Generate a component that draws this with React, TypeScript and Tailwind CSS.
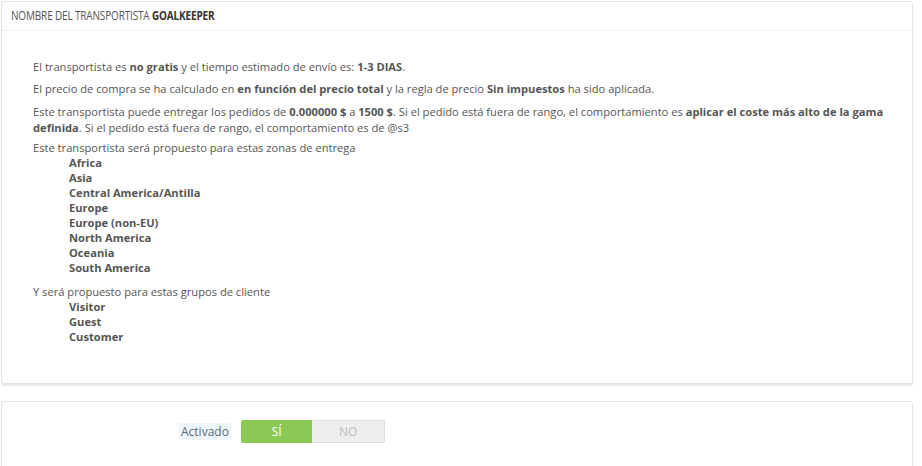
const zones = [
  "Africa",
  "Asia",
  "Central America/Antilla",
  "Europe",
  "Europe (non-EU)",
  "North America",
  "Oceania",
  "South America",
];

const groups = ["Visitor", "Guest", "Customer"];

const body = "font-['Open_Sans',sans-serif]";

function Summary() {
  return (
    <div className="w-[912px] rounded-[3px] border border-[#e3e3e3] bg-white shadow-[0_2px_0_rgba(0,0,0,0.08)]">
      <div className="flex h-[29px] items-center border-b border-[#eeeeee] px-[9px]">
        <span className="inline-block origin-left scale-x-[0.8] whitespace-nowrap font-['Open_Sans',sans-serif] text-[12.5px] uppercase tracking-[-0.2px] text-[#555]">
          Nombre del transportista <b className="font-bold text-[#333]">Goalkeeper</b>
        </span>
      </div>
      <div className={`${body} pb-[39px] pl-[31px] pr-[12px] pt-[28px] text-[11.15px] text-[#555]`}>
        <p className="mb-[6px] leading-[16px]">
          El transportista es <b>no gratis</b> y el tiempo estimado de envío es: <b>1-3 DIAS</b>.
        </p>
        <p className="mb-[7px] leading-[16px]">
          El precio de compra se ha calculado en <b>en función del precio total</b> y la regla de precio{" "}
          <b>Sin impuestos</b> ha sido aplicada.
        </p>
        <p className="mb-[4px] leading-[16px]">
          Este transportista puede entregar los pedidos de <b>0.000000 $</b> a <b>1500 $</b>. Si el pedido está
          fuera de rango, el comportamiento es <b>aplicar el coste más alto de la gama definida</b>. Si el pedido
          está fuera de rango, el comportamiento es de @s3
        </p>
        <div className="mb-[9px] leading-[15px]">
          <div>Este transportista será propuesto para estas zonas de entrega</div>
          <ul className="pl-[36px] font-bold">
            {zones.map((z) => (
              <li key={z}>{z}</li>
            ))}
          </ul>
        </div>
        <div className="leading-[15px]">
          <div>Y será propuesto para estas grupos de cliente</div>
          <ul className="pl-[36px] font-bold">
            {groups.map((g) => (
              <li key={g}>{g}</li>
            ))}
          </ul>
        </div>
      </div>
    </div>
  );
}

function StatusPanel() {
  return (
    <div className="h-[80px] w-[912px] rounded-[3px] border border-[#e3e3e3] bg-white">
      <div className={`${body} flex items-center pl-[177px] pt-[18px] text-[12px]`}>
        <span className="bg-[#eef6fc] px-[2px] leading-[17px] text-[#5a6a75]">Activado</span>
        <div className="ml-[10px] flex h-[23px] w-[144px] overflow-hidden rounded-[2px]">
          <div className="flex flex-1 items-center justify-center bg-[#8bc954] text-white">SÍ</div>
          <div className="flex flex-1 items-center justify-center border border-l-0 border-[#dcdcdc] bg-[#eeeeee] text-[#bbbbbb]">
            NO
          </div>
        </div>
      </div>
    </div>
  );
}

export default function App() {
  return (
    <div className="min-h-[466px] overflow-hidden bg-white pl-px pt-px">
      <Summary />
      <div className="mt-[17px]">
        <StatusPanel />
      </div>
    </div>
  );
}
